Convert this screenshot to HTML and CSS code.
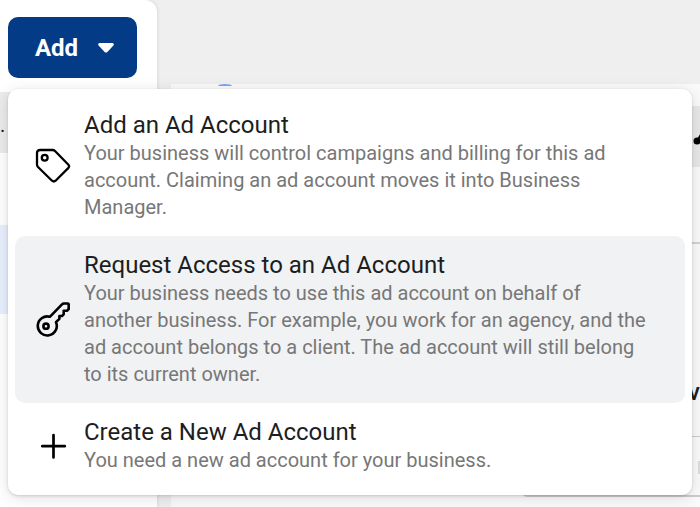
FILE: index.html
```html
<!DOCTYPE html>
<html lang="en">
<head>
<meta charset="utf-8">
<title>Ad Accounts</title>
<link rel="stylesheet" href="styles.css">
</head>
<body>
<div class="page">
  <aside class="sidebar">
    <header class="toolbar">
      <button class="add" type="button" aria-haspopup="menu" aria-expanded="true">Add
        <svg width="16" height="10" viewBox="0 0 16 10"><path d="M1.800 0h12.400c1.400 0 2.100 1.500 1.200 2.500L9.400 8.900a2 2 0 0 1-2.800 0L.6 2.500C-.3 1.500.4 0 1.800 0z" fill="#fff"/></svg>
      </button>
    </header>
    <div class="filter">.</div>
    <div class="selected"></div>
  </aside>
  <main class="main">
    <section class="panel">
      <div class="avatar"><svg width="14" height="2" viewBox="0 0 14 2"><ellipse cx="7" cy="2" rx="7" ry="2" fill="#7ba3f0"/></svg></div>
      <div class="path"><svg width="9" height="14" viewBox="0 0 9 14"><circle cx="4" cy="10" r="3.500" fill="#000"/><path d="M4 10 9 2" stroke="#000" stroke-width="2"/></svg></div>
      <div class="summary"></div>
      <div class="name">v</div>
      <div class="details"><span class="cell"></span></div>
    </section>
  </main>
  <div class="menu" role="menu">
    <button class="item" type="button" role="menuitem">
      <svg class="icon" width="36" height="36" viewBox="0 0 36 36" fill="none" stroke="#000" stroke-width="2.300" stroke-linejoin="round"><path d="M5 2h12.500q1.500 0 2.500 1L33.200 16.500q1.800 1.800 0 3.600L20.600 32.700q-1.800 1.600-3.600 0L3 19q-1-1-1-2.500V5q0-3 3-3z"/><circle cx="9.700" cy="9.700" r="2.900"/></svg>
      <span class="text"><span class="title">Add an Ad Account</span><span class="desc">Your business will control campaigns and billing for this ad account. Claiming an ad account moves it into Business Manager.</span></span>
    </button>
    <button class="item active" type="button" role="menuitem">
      <svg class="icon" width="36" height="36" viewBox="0 0 36 36" fill="none" stroke="#000" stroke-width="2.600" stroke-linejoin="round"><path d="M14.800 15.800 27 3.300q.7-.8 2-.8h3.800q.9 0 .9.900V8l-1.800 1.800h-3.200v3.500l-1.700 1.700h-2.600v2.800L21 21.200a9.500 9.500 0 1 1-6.200-5.400z"/><circle cx="11" cy="25.200" r="2.600"/></svg>
      <span class="text"><span class="title">Request Access to an Ad Account</span><span class="desc">Your business needs to use this ad account on behalf of another business. For example, you work for an agency, and the ad account belongs to a client. The ad account will still belong to its current owner.</span></span>
    </button>
    <button class="item" type="button" role="menuitem">
      <svg class="icon" width="36" height="36" viewBox="0 0 36 36" fill="none" stroke="#000" stroke-width="2.700" stroke-linecap="round"><path d="M18.500 7v22.500M7.300 18.200h22.500"/></svg>
      <span class="text"><span class="title">Create a New Ad Account</span><span class="desc">You need a new ad account for your business.</span></span>
    </button>
  </div>
</div>
</body>
</html>
```
FILE: styles.css
```css
* { box-sizing: border-box; }
body { margin: 0; font-family: Roboto, sans-serif; color: #1c1e21; background: #efefef; }
.page { position: relative; display: flex; gap: 14px; min-height: 100vh; overflow: hidden; }
.sidebar { width: 157px; flex: none; background: #fff; border-radius: 0 12px 0 0; box-shadow: 0 0 4px rgba(0,0,0,.12); }
.toolbar { padding: 17px 20px 14px 8px; }
.add { display: flex; align-items: center; justify-content: center; gap: 20px; width: 100%; height: 61px; padding: 0 0 0 4px; border: 0; border-radius: 10px; background: #043b87; color: #fff; font: 700 24px/28px Roboto, sans-serif; }
.filter { height: 61px; background: #ebebeb; font-size: 20px; line-height: 66px; }
.selected { height: 89px; margin-top: 72px; background: #e8effd; }
.main { flex: 1; min-width: 0; padding-top: 84px; }
.panel { background: #fafafa; min-height: 423px; overflow: hidden; }
.avatar { display: flex; height: 22px; padding-left: 47px; }
.path { display: flex; justify-content: flex-end; align-items: center; height: 61px; background: #e8e8e8; padding-top: 2px; }
.path svg { margin-right: -2px; }
.summary { height: 77px; border-bottom: 2px solid #d4d4d4; }
.name { height: 193px; padding-top: 134px; text-align: right; font-size: 24px; line-height: 28px; font-weight: 500; border-bottom: 1px solid #ccc; }
.details { display: flex; justify-content: flex-end; height: 60px; padding-top: 24px; margin-left: 349px; border-bottom: 2px solid #ccc; border-radius: 0 0 0 8px; }
.cell { width: 2px; height: 13px; background: #ddd; }
.menu { position: absolute; top: 89px; left: 8px; right: 8px; padding: 7px 7px 6px; background: #fff; border-radius: 10px; box-shadow: 0 1px 3px rgba(0,0,0,.15), 0 3px 16px rgba(0,0,0,.12); }
.item { display: flex; align-items: center; gap: 13px; width: 100%; padding: 14px 34px 15px 20px; border: 0; border-radius: 10px; background: transparent; font-family: inherit; text-align: left; }
.active { background: #f0f2f4; }
.icon { flex: none; }
.text { display: block; flex: 1; }
.title { display: block; font-size: 24px; line-height: 30px; color: #1c1e21; }
.desc { display: block; font-size: 20px; line-height: 27px; color: #777; }
```
